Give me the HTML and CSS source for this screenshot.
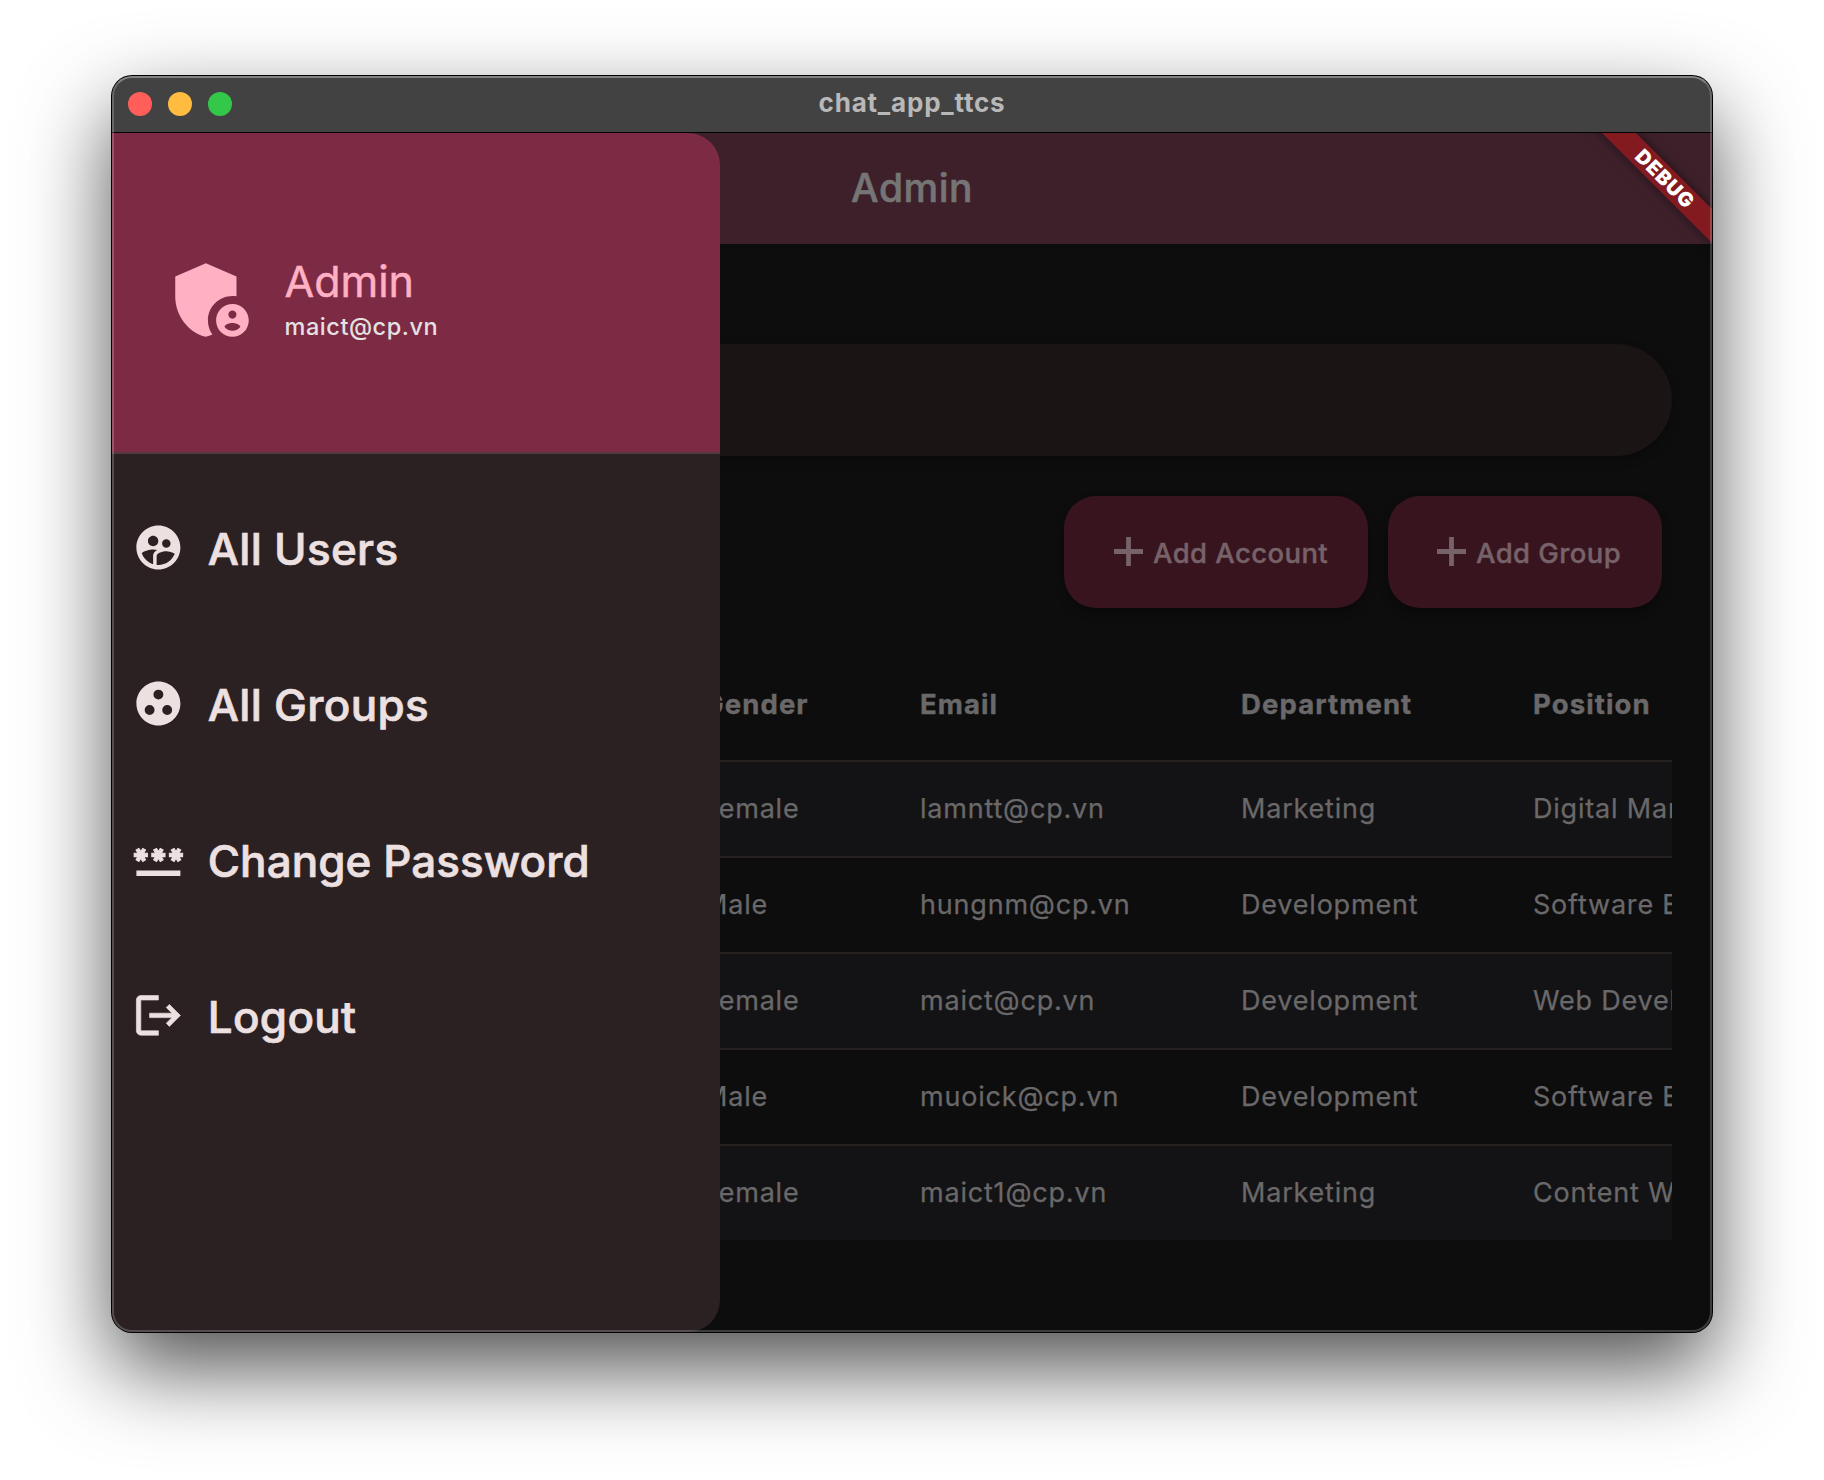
FILE: index.html
```html
<!DOCTYPE html>
<html lang="en">
<head>
<meta charset="utf-8">
<title>chat_app_ttcs</title>
<link rel="stylesheet" href="styles.css">
</head>
<body>
<div class="window">
  <header class="titlebar">
    <div class="lights"><i class="light red"></i><i class="light yellow"></i><i class="light green"></i></div>
    <span class="window-title">chat_app_ttcs</span>
  </header>
  <div class="content">
    <aside class="drawer">
      <div class="drawer-header">
        <svg class="avatar" viewBox="0 0 24 24"><path d="M17 11c.34 0 .67.04 1 .09V6.27L10.5 3 3 6.27v4.91c0 4.54 3.2 8.79 7.5 9.82.55-.13 1.08-.32 1.6-.55-.69-.98-1.1-2.17-1.1-3.45 0-3.31 2.69-6 6-6z"/><path fill-rule="evenodd" d="M17 13c-2.21 0-4 1.79-4 4s1.79 4 4 4 4-1.79 4-4-1.79-4-4-4zm0 1.58c.55 0 1 .45 1 1s-.45 1-1 1-1-.45-1-1 .45-1 1-1zm0 4.97c-.8 0-1.5-.38-1.95-.98.1-.62 1.3-.95 1.95-.95s1.85.33 1.95.95c-.45.6-1.15.98-1.95.98z"/></svg>
        <div class="who">
          <span class="name">Admin</span>
          <span class="mail">maict@cp.vn</span>
        </div>
      </div>
      <nav class="menu">
        <a class="item"><svg viewBox="0 0 24 24"><path d="M11.99 2c-5.52 0-10 4.48-10 10s4.48 10 10 10 10-4.48 10-10-4.48-10-10-10zm3.61 6.34c1.07 0 1.93.86 1.93 1.93 0 1.07-.86 1.93-1.93 1.93-1.07 0-1.93-.86-1.93-1.93-.01-1.07.86-1.93 1.93-1.93zm-6-1.58c1.3 0 2.36 1.06 2.36 2.36 0 1.3-1.06 2.36-2.36 2.36s-2.36-1.06-2.36-2.36c0-1.31 1.05-2.36 2.36-2.36zm0 9.13v3.75c-2.4-.75-4.3-2.6-5.14-4.96 1.05-1.12 3.67-1.69 5.14-1.69.53 0 1.2.08 1.9.22-1.64.87-1.9 2.02-1.9 2.68zM11.99 20c-.27 0-.53-.01-.79-.04v-4.07c0-1.42 2.94-2.13 4.4-2.13 1.07 0 2.92.39 3.84 1.15-1.17 2.97-4.06 5.09-7.45 5.09z"/></svg><span class="t-users">All Users</span></a>
        <a class="item"><svg viewBox="0 0 24 24"><path d="M12 2C6.48 2 2 6.48 2 12s4.48 10 10 10 10-4.48 10-10S17.52 2 12 2zM8 17.25a2.25 2.25 0 1 1 0-4.5 2.25 2.25 0 0 1 0 4.5zM12 10.25a2.25 2.25 0 1 1 0-4.5 2.25 2.25 0 0 1 0 4.5zM16 17.25a2.25 2.25 0 1 1 0-4.5 2.25 2.25 0 0 1 0 4.5z" fill-rule="evenodd"/></svg><span class="t-groups">All Groups</span></a>
        <a class="item"><svg viewBox="0 0 24 24"><path d="M2 17h20v2.5H2V17z"/><path stroke="currentColor" stroke-width=".5" d="M3.15 12.95 4 11.47l.85 1.48 1.3-.75-.85-1.48H7v-1.5H5.3l.85-1.47L4.85 7 4 8.47 3.15 7l-1.3.75.85 1.47H1v1.5h1.7l-.85 1.48zM9.85 12.2l1.3.75.85-1.48.85 1.48 1.3-.75-.85-1.48H15v-1.5h-1.7l.85-1.47-1.3-.75L12 8.47 11.15 7l-1.3.75.85 1.47H9v1.5h1.7zM23 9.22h-1.7l.85-1.47-1.3-.75L20 8.47 19.15 7l-1.3.75.85 1.47H17v1.5h1.7l-.85 1.48 1.3.75.85-1.48.85 1.48 1.3-.75-.85-1.48H23z"/></svg><span class="t-password">Change Password</span></a>
        <a class="item"><svg viewBox="0 0 24 24"><path stroke="currentColor" stroke-width=".3" d="m17 7-1.41 1.41L18.17 11H8v2h10.17l-2.58 2.58L17 17l5-5zM4 5h8V3H4c-1.1 0-2 .9-2 2v14c0 1.1.9 2 2 2h8v-2H4V5z"/></svg><span class="t-logout">Logout</span></a>
      </nav>
    </aside>
    <main class="page">
      <div class="appbar">Admin</div>
      <div class="search"></div>
      <div class="actions">
        <button class="btn account"><svg viewBox="0 0 29 29"><path d="M12.1 0h4.8v12.1H29v4.8H16.9V29h-4.8V16.9H0v-4.8h12.1z"/></svg><span>Add Account</span></button>
        <button class="btn group"><svg viewBox="0 0 29 29"><path d="M12.1 0h4.8v12.1H29v4.8H16.9V29h-4.8V16.9H0v-4.8h12.1z"/></svg><span>Add Group</span></button>
      </div>
      <div class="table">
        <div class="row head"><span>Gender</span><span>Email</span><span>Department</span><span>Position</span></div>
        <div class="row"><span>Female</span><span>lamntt@cp.vn</span><span>Marketing</span><span>Digital Marketing</span></div>
        <div class="row"><span>Male</span><span>hungnm@cp.vn</span><span>Development</span><span>Software Engineer</span></div>
        <div class="row"><span>Female</span><span>maict@cp.vn</span><span>Development</span><span>Web Developer</span></div>
        <div class="row"><span>Male</span><span>muoick@cp.vn</span><span>Development</span><span>Software Engineer</span></div>
        <div class="row"><span>Female</span><span>maict1@cp.vn</span><span>Marketing</span><span>Content Writer</span></div>
      </div>
    </main>
    <div class="banner">DEBUG</div>
  </div>
</div>
</body>
</html>
```
FILE: styles.css
```css
* { box-sizing: border-box; }
body {
  margin: 0;
  width: 1824px;
  height: 1480px;
  padding: 76px 112px 148px;
  background: #fff;
  font-family: Inter, "Liberation Sans", sans-serif;
  overflow: hidden;
}
.window {
  position: relative;
  width: 1600px;
  height: 1256px;
  border-radius: 20px;
  background: #0d0d0e;
  box-shadow: 0 0 0 1px #000, 0 36px 86px rgba(0, 0, 0, .69);
}
/* translucent rim over the window's edge */
.window::after {
  content: "";
  position: absolute;
  z-index: 5;
  inset: 0;
  border-radius: 20px;
  border: 2px solid rgba(255, 255, 255, .2);
  border-top-color: rgba(255, 255, 255, .34);
  pointer-events: none;
}
.titlebar {
  position: relative;
  height: 57px;
  display: flex;
  align-items: center;
  justify-content: center;
  background: #424242;
  border-bottom: 1px solid #000;
  border-radius: 20px 20px 0 0;
}
.lights { position: absolute; left: 16px; top: 16px; display: flex; gap: 16px; }
.light { width: 24px; height: 24px; border-radius: 50%; }
.red { background: #ff5f58; }
.yellow { background: #ffbc40; }
.green { background: #34c84a; }
.window-title { font-size: 26px; font-weight: 700; line-height: 30px; letter-spacing: .8px; color: #b8b8b8; margin-top: -3px; font-feature-settings: "liga" 0, "calt" 0; }

.content {
  position: relative;
  display: flex;
  height: 1199px;
  overflow: hidden;
  border-radius: 0 0 20px 20px;
  background: linear-gradient(#3e202b 111px, #0d0d0e 111px);
}
.drawer {
  position: relative;
  z-index: 1;
  flex: none;
  width: 608px;
  background: #2c2122;
  border-radius: 0 32px 32px 0;
  overflow: hidden;
}
.drawer-header {
  display: flex;
  height: 321px;
  padding: 117.5px 0 0 51px;
  background: #7d2a45;
  border-bottom: 2px solid #54393f;
}
.avatar { width: 98px; height: 98px; fill: #ffb1c3; }
.who { display: flex; flex-direction: column; margin-left: 23.5px; }
.name { font-size: 43px; line-height: 52px; margin-top: 4.5px; color: #ffb1c3; -webkit-text-stroke: .5px; }
.mail { font-size: 23.5px; line-height: 30px; margin-top: 5px; color: #e4e1e1; letter-spacing: .55px; font-weight: 450; }
.menu { display: flex; flex-direction: column; padding-top: 15px; }
.item {
  display: flex;
  align-items: center;
  height: 156px;
  padding-left: 19.5px;
  color: #ede0e1;
  font-size: 44px;
  font-weight: 500;
  letter-spacing: .3px;
  white-space: nowrap;
}
.item svg { width: 52.8px; height: 52.8px; fill: currentColor; }
.item span { margin-left: 23.5px; line-height: 56px; padding-top: 3px; -webkit-text-stroke: .7px; }
.item .t-password { letter-spacing: .05px; }

.page { flex: 1; position: relative; min-width: 0; }
.appbar {
  display: flex;
  align-items: center;
  justify-content: center;
  height: 111px;
  margin-left: -608px;
  padding-bottom: 2px;
  background: #3e202b;
  color: #757575;
  font-size: 39px;
  font-weight: 500;
  letter-spacing: .5px;
  -webkit-text-stroke: .6px;
}
.search {
  height: 112px;
  margin: 100px 40px 0 -568px;
  border-radius: 56px;
  background: #1a1415;
  box-shadow: 0 4px 10px rgba(0, 0, 0, .3);
}
.actions { display: flex; justify-content: flex-end; gap: 20px; margin: 40px 50px 0 0; }
.btn {
  display: flex;
  align-items: center;
  height: 112px;
  padding: 0 0 0 49px;
  border: 0;
  border-radius: 32px;
  background: #38141f;
  color: #766268;
  font: 500 27.5px/34px Inter, sans-serif;
  letter-spacing: .4px;
  box-shadow: 0 5px 10px rgba(0, 0, 0, .35);
  white-space: nowrap;
}
.account { width: 304px; padding-left: 50px; }
.group { width: 274px; }
.btn svg { width: 29px; height: 29px; fill: currentColor; margin-top: -1px; }
.btn span { margin-left: 10px; padding-top: 1px; -webkit-text-stroke: .4px; }
.table { margin: 40px 40px 0 -568px; overflow: hidden; }
.row {
  display: grid;
  grid-template-columns: 217px 321px 292px 400px;
  align-items: center;
  height: 96px;
  padding: 0 0 2px 551px;
  border-top: 2px solid #262020;
  color: #6a6869;
  font-size: 27px;
  letter-spacing: .8px;
  -webkit-text-stroke: .25px;
  white-space: nowrap;
}
.row:nth-child(even) { background: #131315; }
.head { height: 112px; padding-bottom: 0; border-top: 0; font-size: 27.5px; font-weight: 700; letter-spacing: 1.1px; -webkit-text-stroke: .4px; }

.banner {
  position: absolute;
  z-index: 2;
  left: 1452.5px;
  top: 34px;
  width: 200px;
  height: 24px;
  transform: rotate(45deg);
  background: #821a20;
  box-shadow: 0 0 12px rgba(0, 0, 0, .5);
  color: #fff;
  font-size: 20px;
  font-weight: 900;
  line-height: 24px;
  letter-spacing: .9px;
  text-align: center;
}
```
